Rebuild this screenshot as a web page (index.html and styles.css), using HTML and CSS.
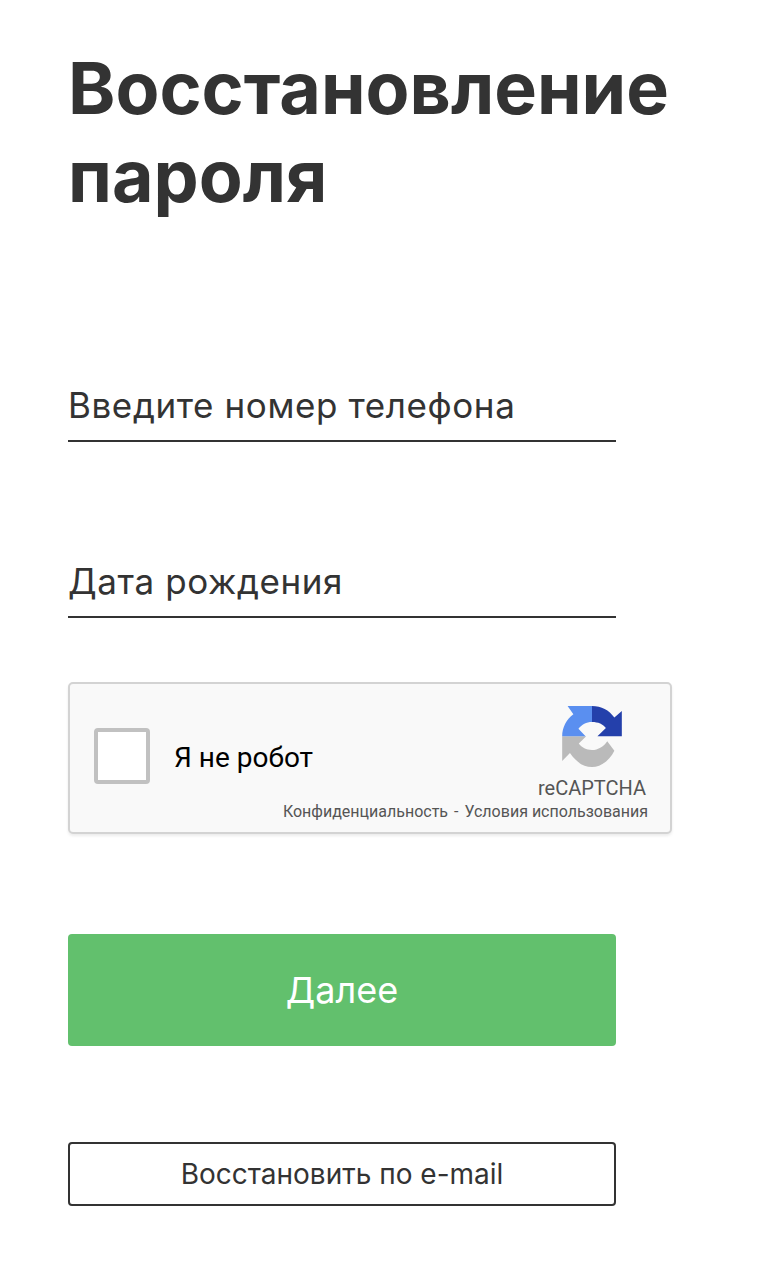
FILE: index.html
```html
<!DOCTYPE html>
<html lang="ru">
  <head>
    <meta charset="UTF-8" />
    <meta name="viewport" content="width=device-width, initial-scale=1.0" />
    <title>Восстановление пароля</title>
    <link rel="stylesheet" href="styles.css">
  </head>
  <body>
    <div class="container">
      <h1>Восстановление пароля</h1>
      <form class="form">
        <label class="field">Введите номер телефона</label>
        <label class="field">Дата рождения</label>
        <div class="captcha">
          <span class="captcha-check"></span>
          <span class="captcha-label">Я не робот</span>
          <div class="captcha-brand">
            <svg class="captcha-logo" viewBox="14 13 176 180">
              <path fill="#bababa" d="M14 102H85L63 124C72 136 85 143 102 143C120 143 138 132 147 117L168 145C155 172 130 193 102 193C75 193 55 178 37 152L14 175Z"/>
              <path fill="#5a8ff0" d="M14 102C14 75 27 52 47 37L30 13H102V60C85 60 72 68 62 80L83 102Z"/>
              <path fill="#2440ab" d="M102 13C130 13 152 25 168 47L190 28V102H118L143 78C135 66 120 60 102 60Z"/>
            </svg>
            <span class="captcha-name">reCAPTCHA</span>
            <span class="captcha-links">Конфиденциальность<i class="captcha-dash">-</i>Условия использования</span>
          </div>
        </div>
        <button class="btn-next" type="button">Далее</button>
        <button class="btn-email" type="button">Восстановить по e-mail</button>
      </form>
    </div>
  </body>
</html>
```

FILE: styles.css
```css
body {
  margin: 0;
  background-color: #fff;
  font-family: Inter, "Liberation Sans", sans-serif;
  color: #333;
}

.container {
  padding: 44px 0 0 68px;
}

h1 {
  margin: 0;
  width: 640px;
  font-size: 71.7px;
  line-height: 88px;
  font-weight: 700;
}

.form {
  display: flex;
  flex-direction: column;
  align-items: flex-start;
  margin-top: 138px;
}

.field {
  display: block;
  box-sizing: border-box;
  width: 548px;
  height: 84px;
  padding-top: 25px;
  border-bottom: 2px solid #333;
  font-size: 35px;
  font-weight: 370;
  letter-spacing: 0.6px;
  line-height: 44px;
  margin-bottom: 92px;
}

.field + .field {
  margin-bottom: 64px;
}

.captcha {
  position: relative;
  box-sizing: border-box;
  display: flex;
  align-items: center;
  width: 604px;
  height: 152px;
  padding-left: 24px;
  padding-bottom: 5px;
  background-color: #f9f9f9;
  border: 2px solid #d3d3d3;
  border-radius: 5px;
  box-shadow: 0 2px 3px rgba(0, 0, 0, 0.08);
}

.captcha-check {
  box-sizing: border-box;
  width: 56px;
  height: 56px;
  background-color: #fff;
  border: 4px solid #c1c1c1;
  border-radius: 4px;
}

.captcha-label {
  margin-top: 3px;
  margin-left: 24px;
  font-family: Roboto, sans-serif;
  font-size: 28px;
  color: #000;
}

.captcha-brand {
  position: absolute;
  top: 0;
  right: 0;
  bottom: 0;
  left: 0;
  font-family: Roboto, sans-serif;
  color: #555;
}

.captcha-logo {
  position: absolute;
  top: 22px;
  left: 492px;
  width: 60px;
  height: 61px;
}

.captcha-name {
  position: absolute;
  top: 92px;
  right: 24px;
  font-size: 20px;
}

.captcha-links {
  position: absolute;
  top: 118px;
  right: 22px;
  font-size: 16px;
  white-space: nowrap;
}

.captcha-dash {
  margin: 0 6px;
  font-style: normal;
}

.btn-next {
  width: 548px;
  height: 112px;
  margin-top: 100px;
  background-color: #62c06d;
  border: none;
  border-radius: 4px;
  color: #fff;
  font-family: inherit;
  font-size: 36px;
  font-weight: 370;
}

.btn-email {
  box-sizing: border-box;
  width: 548px;
  height: 64px;
  margin-top: 96px;
  background-color: #fff;
  border: 2px solid #333;
  border-radius: 4px;
  color: #333;
  font-family: inherit;
  font-size: 28px;
  font-weight: 370;
}
```
